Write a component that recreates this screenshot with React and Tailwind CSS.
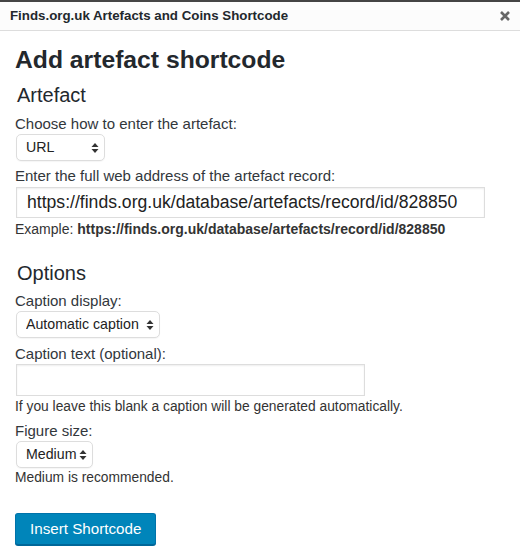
import React, { useState } from "react";

const font = { fontFamily: '"Liberation Sans", Arial, sans-serif' };

function Arrows() {
  return (
    <svg width="8" height="12" viewBox="0 0 8 12" className="pointer-events-none absolute right-[6px] top-1/2 -translate-y-1/2">
      <path d="M4 1 L7.5 5 L0.5 5 Z" fill="#333" />
      <path d="M4 11 L7.5 7 L0.5 7 Z" fill="#333" />
    </svg>
  );
}

function Select({ value, options, width, onChange }) {
  return (
    <div className={`relative ${width}`}>
      <select
        value={value}
        onChange={(e) => onChange(e.target.value)}
        className="h-[27px] w-full appearance-none rounded-[5px] border border-[#ddd] bg-white pl-[9px] pr-[14px] text-[14.2px] text-[#222] shadow-[0_1px_1px_rgba(0,0,0,0.04)] outline-none"
      >
        {options.map((o) => (
          <option key={o}>{o}</option>
        ))}
      </select>
      <Arrows />
    </div>
  );
}

export default function App() {
  const [mode, setMode] = useState("URL");
  const [url, setUrl] = useState("https://finds.org.uk/database/artefacts/record/id/828850");
  const [captionMode, setCaptionMode] = useState("Automatic caption");
  const [caption, setCaption] = useState("");
  const [size, setSize] = useState("Medium");

  return (
    <div className="h-[559px] w-[520px] overflow-hidden bg-white text-[#32373c]" style={font}>
      <div className="h-[2px] bg-[#444]" />
      {/* Header */}
      <div className="flex h-[29px] items-center justify-between border-b border-[#ddd] bg-[#fcfcfc] pl-[10px] pr-[9px]">
        <span className="text-[13.3px] font-bold text-[#23282d]">Finds.org.uk Artefacts and Coins Shortcode</span>
        <svg width="12" height="12" viewBox="0 0 12 12">
          <path d="M2 2 L10 10 M10 2 L2 10" stroke="#666" strokeWidth="2.6" />
        </svg>
      </div>

      <div className="px-[15px] text-[15px]">
        <h1 className="mt-[14px] text-[24.7px] font-bold leading-[30px] text-[#23282d]">Add artefact shortcode</h1>
        <h2 className="mt-[8px] ml-[2px] text-[20px] leading-[24px] text-[#23282d]">Artefact</h2>

        <p className="mt-[8px] leading-[18px]">Choose how to enter the artefact:</p>
        <div className="mt-px ml-px">
          <Select value={mode} options={["URL", "Record ID"]} width="w-[89px]" onChange={setMode} />
        </div>

        <p className="mt-[6px] leading-[18px]">Enter the full web address of the artefact record:</p>
        <input
          value={url}
          onChange={(e) => setUrl(e.target.value)}
          className="mt-[2px] ml-px h-[31px] w-[469px] border border-[#ddd] bg-white px-[10px] text-[17.6px] text-[#222] shadow-[inset_0_1px_2px_rgba(0,0,0,0.07)] outline-none"
        />
        <p className="mt-[2px] text-[14px] leading-[18px] text-[#333]">
          Example: <b>https://finds.org.uk/database/artefacts/record/id/828850</b>
        </p>

        <h2 className="mt-[23px] ml-[2px] text-[20px] leading-[24px] text-[#23282d]">Options</h2>

        <p className="mt-[7px] leading-[18px]">Caption display:</p>
        <div className="mt-px ml-px">
          <Select value={captionMode} options={["Automatic caption", "Custom caption", "No caption"]} width="w-[144px]" onChange={setCaptionMode} />
        </div>

        <p className="mt-[7px] leading-[18px]">Caption text (optional):</p>
        <input
          value={caption}
          onChange={(e) => setCaption(e.target.value)}
          className="mt-px ml-px h-[32px] w-[349px] border border-[#ddd] bg-white px-[10px] text-[17.6px] shadow-[inset_0_1px_2px_rgba(0,0,0,0.07)] outline-none"
        />
        <p className="mt-[2px] text-[13.8px] leading-[18px] text-[#333]">If you leave this blank a caption will be generated automatically.</p>

        <p className="mt-[6px] leading-[18px]">Figure size:</p>
        <div className="mt-px ml-px">
          <Select value={size} options={["Small", "Medium", "Large"]} width="w-[77px]" onChange={setSize} />
        </div>
        <p className="mt-px text-[13.8px] leading-[18px] text-[#333]">Medium is recommended.</p>

        <button className="mt-[26px] h-[32px] rounded-[3px] border border-[#0073aa] border-b-[#006799] bg-[#0085ba] px-[14px] text-[15.2px] text-white shadow-[0_1px_0_#006799]">
          Insert Shortcode
        </button>
      </div>
    </div>
  );
}
